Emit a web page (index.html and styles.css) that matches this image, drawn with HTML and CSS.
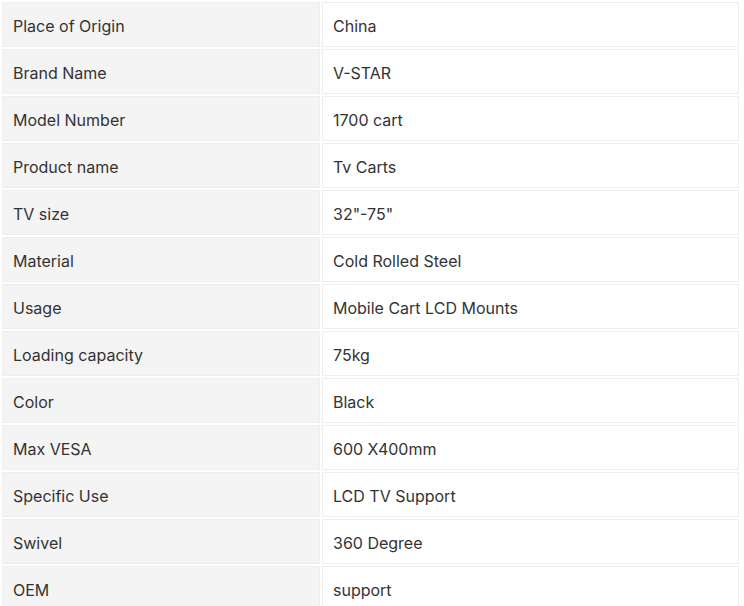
FILE: index.html
```html
<!DOCTYPE html>
<html>
<head>
<meta charset="utf-8">
<link rel="stylesheet" href="styles.css">
</head>
<body>
<table class="spec">
<tbody>
<tr><td class="k">Place of Origin</td><td class="v">China</td></tr>
<tr><td class="k">Brand Name</td><td class="v">V-STAR</td></tr>
<tr><td class="k">Model Number</td><td class="v">1700 cart</td></tr>
<tr><td class="k">Product name</td><td class="v">Tv Carts</td></tr>
<tr><td class="k">TV size</td><td class="v">32"-75"</td></tr>
<tr><td class="k">Material</td><td class="v">Cold Rolled Steel</td></tr>
<tr><td class="k">Usage</td><td class="v">Mobile Cart LCD Mounts</td></tr>
<tr><td class="k">Loading capacity</td><td class="v">75kg</td></tr>
<tr><td class="k">Color</td><td class="v">Black</td></tr>
<tr><td class="k">Max VESA</td><td class="v">600 X400mm</td></tr>
<tr><td class="k">Specific Use</td><td class="v">LCD TV Support</td></tr>
<tr><td class="k">Swivel</td><td class="v">360 Degree</td></tr>
<tr><td class="k">OEM</td><td class="v">support</td></tr>
</tbody>
</table>
</body>
</html>
```
FILE: styles.css
```css
html, body {
  margin: 0;
  padding: 0;
  background: #ffffff;
}
body {
  font-family: Inter, "Noto Sans", sans-serif;
  font-size: 16px;
  color: #333333;
}
.spec {
  width: 741px;
  border-collapse: separate;
  border-spacing: 2px;
  margin: 0;
}
.spec td {
  padding: 3px 0 0 10px;
  border: 1px solid #eeeeee;
  vertical-align: middle;
  box-sizing: border-box;
  height: 45px;
}
.spec .k {
  width: 318px;
  background: #f4f4f4;
}
.spec .v {
  background: #ffffff;
}
```
